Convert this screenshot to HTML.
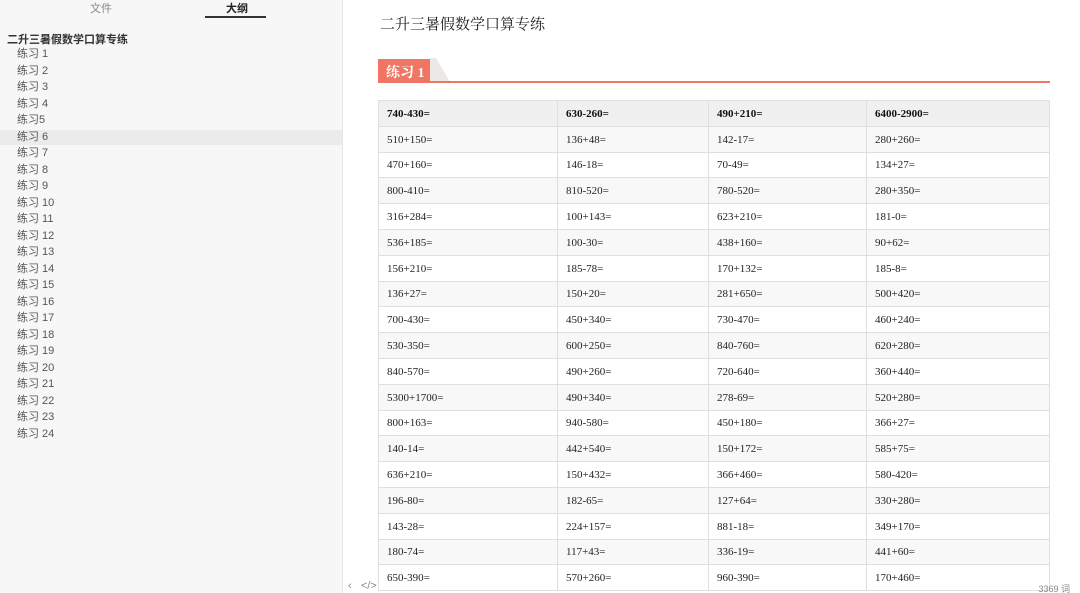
<!DOCTYPE html><html style="height:593px;overflow:hidden"><head><meta charset="utf-8"><style>
body{margin:0;width:1080px;height:593px;overflow:hidden;background:#fff;font-family:"Liberation Sans","Noto Sans CJK SC",sans-serif;position:relative}
#side{position:absolute;left:0;top:0;width:342px;height:593px;background:#f7f7f7;border-right:1px solid #e6e6e6}
.tab{position:absolute;top:0;font-size:11px;color:#888}
.it{position:absolute;left:17px;font-size:11px;color:#555;line-height:16px}
#main{position:absolute;left:343px;top:0;width:737px;height:593px;overflow:hidden}
.s{font-family:"Liberation Serif","Noto Serif CJK SC",serif}
table{position:absolute;left:35px;top:100px;width:672px;border-collapse:collapse;font-family:"Liberation Serif","Noto Serif CJK SC",serif;font-size:11px;color:#222}
td{border:1px solid #dfdfdf;height:23.8px;padding:1px 0 0 8px}
tr:nth-child(even) td{background:#f8f8f8}
tr:first-child td{background:#f0f0f0;font-weight:bold;color:#111}
</style></head><body>
<div id="side">
<div class="tab" style="left:90px">文件</div>
<div class="tab" style="left:226px;color:#222;font-weight:bold">大纲</div>
<div style="position:absolute;left:205px;top:16px;width:61px;height:2px;background:#333"></div>
<div style="position:absolute;left:7px;top:31px;font-size:11px;font-weight:bold;color:#333">二升三暑假数学口算专练</div>
<div style="position:absolute;left:0;top:130px;width:342px;height:15px;background:#ebebeb"></div>
<div class="it" style="top:46px">练习 1</div><div class="it" style="top:62.5px">练习 2</div><div class="it" style="top:79px">练习 3</div><div class="it" style="top:95.5px">练习 4</div><div class="it" style="top:112px">练习5</div><div class="it" style="top:128.5px">练习 6</div><div class="it" style="top:145px">练习 7</div><div class="it" style="top:161.5px">练习 8</div><div class="it" style="top:178px">练习 9</div><div class="it" style="top:194.5px">练习 10</div><div class="it" style="top:211px">练习 11</div><div class="it" style="top:227.5px">练习 12</div><div class="it" style="top:244px">练习 13</div><div class="it" style="top:260.5px">练习 14</div><div class="it" style="top:277px">练习 15</div><div class="it" style="top:293.5px">练习 16</div><div class="it" style="top:310px">练习 17</div><div class="it" style="top:326.5px">练习 18</div><div class="it" style="top:343px">练习 19</div><div class="it" style="top:359.5px">练习 20</div><div class="it" style="top:376px">练习 21</div><div class="it" style="top:392.5px">练习 22</div><div class="it" style="top:409px">练习 23</div><div class="it" style="top:425.5px">练习 24</div>
</div>
<div id="main">
<div class="s" style="position:absolute;left:37px;top:13px;font-size:15px;color:#222">二升三暑假数学口算专练</div>
<svg style="position:absolute;left:35px;top:58px" width="680" height="26"><polygon points="52,0 58,0 72,24 52,24" fill="#ebe8e6"/><rect x="0" y="1" width="52" height="23" fill="#f07563"/><rect x="0" y="23" width="672" height="2" fill="#f07563"/></svg>
<div class="s" style="position:absolute;left:43px;top:62px;font-size:14px;color:#fff;font-weight:bold">练习 1</div>
<table>
<tr><td style="width:170px">740-430=</td><td style="width:142px">630-260=</td><td style="width:149px">490+210=</td><td>6400-2900=</td></tr>
<tr><td>510+150=</td><td>136+48=</td><td>142-17=</td><td>280+260=</td></tr>
<tr><td>470+160=</td><td>146-18=</td><td>70-49=</td><td>134+27=</td></tr>
<tr><td>800-410=</td><td>810-520=</td><td>780-520=</td><td>280+350=</td></tr>
<tr><td>316+284=</td><td>100+143=</td><td>623+210=</td><td>181-0=</td></tr>
<tr><td>536+185=</td><td>100-30=</td><td>438+160=</td><td>90+62=</td></tr>
<tr><td>156+210=</td><td>185-78=</td><td>170+132=</td><td>185-8=</td></tr>
<tr><td>136+27=</td><td>150+20=</td><td>281+650=</td><td>500+420=</td></tr>
<tr><td>700-430=</td><td>450+340=</td><td>730-470=</td><td>460+240=</td></tr>
<tr><td>530-350=</td><td>600+250=</td><td>840-760=</td><td>620+280=</td></tr>
<tr><td>840-570=</td><td>490+260=</td><td>720-640=</td><td>360+440=</td></tr>
<tr><td>5300+1700=</td><td>490+340=</td><td>278-69=</td><td>520+280=</td></tr>
<tr><td>800+163=</td><td>940-580=</td><td>450+180=</td><td>366+27=</td></tr>
<tr><td>140-14=</td><td>442+540=</td><td>150+172=</td><td>585+75=</td></tr>
<tr><td>636+210=</td><td>150+432=</td><td>366+460=</td><td>580-420=</td></tr>
<tr><td>196-80=</td><td>182-65=</td><td>127+64=</td><td>330+280=</td></tr>
<tr><td>143-28=</td><td>224+157=</td><td>881-18=</td><td>349+170=</td></tr>
<tr><td>180-74=</td><td>117+43=</td><td>336-19=</td><td>441+60=</td></tr>
<tr><td>650-390=</td><td>570+260=</td><td>960-390=</td><td>170+460=</td></tr>
</table>
<div style="position:absolute;left:5px;top:580px;font-size:11px;color:#888">‹ &nbsp;&nbsp;&lt;/&gt;</div>
<div style="position:absolute;right:10px;top:582px;font-size:9px;color:#888">3369 词</div>
</div>
</body></html>
